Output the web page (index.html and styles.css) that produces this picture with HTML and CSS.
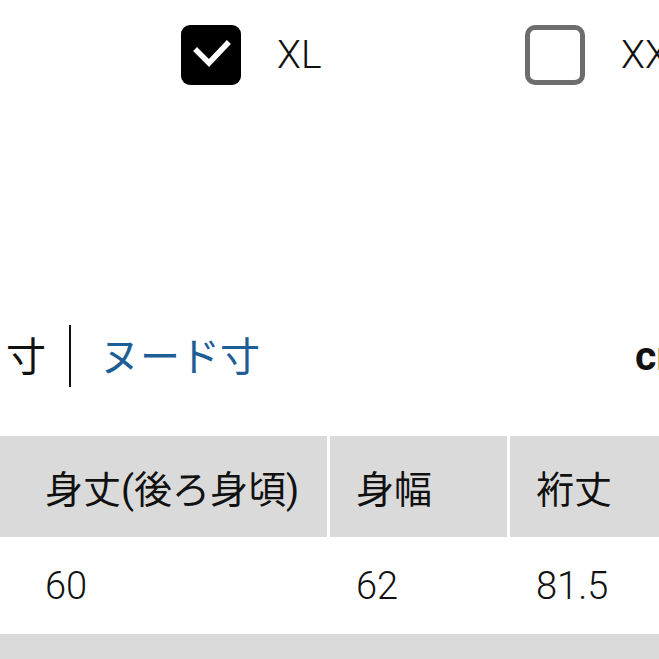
FILE: index.html
```html
<!DOCTYPE html>
<html lang="ja">
<head>
<meta charset="utf-8">
<title>サイズ</title>
<link rel="stylesheet" href="styles.css">
</head>
<body>
<div class="page">
  <div class="sizes">
    <label class="size">
      <span class="box checked">
        <svg viewBox="0 0 60 60" width="60" height="60"><path d="M16 26 L28 38 L46 19" fill="none" stroke="#fff" stroke-width="5.5" stroke-linecap="square"/></svg>
      </span>
      <span class="size-label">XL</span>
    </label>
    <label class="size">
      <span class="box"></span>
      <span class="size-label">XXL</span>
    </label>
  </div>

  <div class="tabs">
    <span class="tab">寸</span>
    <span class="divider"></span>
    <span class="tab tab-link">ヌード寸</span>
    <span class="unit">cm</span>
  </div>

  <div class="table">
    <div class="cell head"></div>
    <div class="cell head">身丈(後ろ身頃)</div>
    <div class="cell head">身幅</div>
    <div class="cell head">裄丈</div>

    <div class="cell body first"></div>
    <div class="cell body">60</div>
    <div class="cell body">62</div>
    <div class="cell body">81.5</div>

    <div class="cell head next"></div>
  </div>
</div>
</body>
</html>
```

FILE: styles.css
```css
html, body {
  margin: 0;
  padding: 0;
  background: #fff;
  overflow: hidden;
}
body {
  width: 659px;
  height: 659px;
  font-family: Roboto, "Noto Sans CJK JP", sans-serif;
  color: #111;
}
.page {
  width: 659px;
  height: 659px;
  overflow: hidden;
}
.sizes {
  display: grid;
  grid-template-columns: 344px 200px;
  padding: 25px 0 0 181px;
  height: 60px;
}
.size {
  display: flex;
  align-items: center;
  gap: 36px;
  white-space: nowrap;
}
.box {
  box-sizing: border-box;
  width: 60px;
  height: 60px;
  flex: none;
  border: 5px solid #6d6d6d;
  border-radius: 10px;
  background: #fff;
}
.box.checked {
  border: none;
  background: #000;
  border-radius: 9px;
}
.box svg { display: block; }
.size-label {
  font-family: Roboto, sans-serif;
  font-weight: 300;
  font-size: 39px;
  line-height: 1;
  color: #111;
}
.tabs {
  display: flex;
  align-items: center;
  width: 692px;
  margin-top: 240px;
  height: 62px;
  white-space: nowrap;
}
.tab {
  font-family: "Noto Sans CJK JP", sans-serif;
  font-size: 40px;
  line-height: 1;
  padding-left: 6px;
  margin-top: -5px;
  color: #111;
}
.divider {
  width: 2px;
  height: 62px;
  background: #111;
  margin: 0 29px 0 23px;
  flex: none;
}
.tab-link {
  padding-left: 0;
  color: #1d5e95;
}
.unit {
  margin-left: auto;
  font-family: Roboto, sans-serif;
  font-weight: 700;
  font-size: 41px;
  line-height: 1;
  color: #111;
}
.table {
  display: grid;
  grid-template-columns: 16px 308px 177px 220px;
  grid-template-rows: 101px 96px 40px;
  column-gap: 3px;
  margin-top: 49px;
  width: 740px;
}
.cell {
  display: flex;
  align-items: center;
  padding-left: 26px;
  white-space: nowrap;
  box-sizing: border-box;
}
.head {
  background: #dadada;
  font-family: Roboto, "Noto Sans CJK JP", sans-serif;
  font-size: 38px;
  color: #111;
}
.body {
  background: #fff;
  font-weight: 300;
  font-size: 38px;
  padding-top: 2px;
  color: #111;
}
.first {
  border-right: 1px solid #d0d0d0;
}
.next {
  grid-column: 1 / -1;
  margin-top: 1px;
}
```
